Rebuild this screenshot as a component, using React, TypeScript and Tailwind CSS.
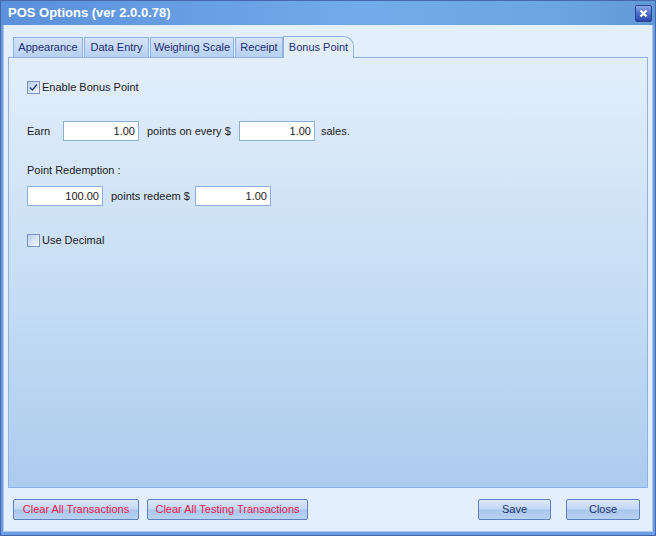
import React from 'react'

const font = { fontFamily: '"Liberation Sans", Arial, sans-serif' }

function Check({ checked }: { checked?: boolean }) {
  return (
    <span className="flex h-[13px] w-[13px] items-center justify-center border border-[#7a95c4] bg-[linear-gradient(135deg,#b7cdec_0%,#dce8f8_60%,#f4f8fe_100%)]">
      {checked && (
        <svg width="9" height="9" viewBox="0 0 9 9">
          <path d="M1 4.5 L3.5 7 L8 1.5" fill="none" stroke="#233d8a" strokeWidth="1.4" />
        </svg>
      )}
    </span>
  )
}

function Box({ value, w }: { value: string; w: string }) {
  return (
    <div className={`flex h-[20px] ${w} items-center justify-end border border-[#8aaee0] bg-white pr-[3px] text-[#1b1b1b]`}>
      {value}
    </div>
  )
}

function Btn({ label, red, w }: { label: string; red?: boolean; w: string }) {
  return (
    <button
      className={`h-[21px] ${w} rounded-[2px] border border-[#5f7fc3] bg-[linear-gradient(180deg,#dde9f9_0%,#c2d8f4_45%,#aac7ee_55%,#b9d2f2_100%)] text-[11px] ${red ? 'text-[#ec1a4c]' : 'text-[#1d2f6e]'}`}
    >
      {label}
    </button>
  )
}

export default function App() {
  const tabs = ['Appearance', 'Data Entry', 'Weighing Scale', 'Receipt']
  const tabW = ['w-[70px]', 'w-[65px]', 'w-[84px]', 'w-[48px]']
  return (
    <div style={font} className="h-[536px] w-[656px] bg-[#4468ab] p-px text-[11px]">
      <div className="flex h-full w-full flex-col bg-[#6d9de0]">
        <div className="flex h-[24px] items-center justify-between bg-[linear-gradient(90deg,#5b90da_0%,#72abeb_55%,#6ba5e2_85%,#6198d6_100%)] pl-[7px] pr-[3px]">
          <span className="text-[13px] font-bold text-white">POS Options (ver 2.0.0.78)</span>
          <span className="flex h-[17px] w-[17px] items-center justify-center rounded-[2px] border border-[#2b4690] bg-[linear-gradient(180deg,#8aa8e8_0%,#4d70cf_50%,#2c48a8_100%)]">
            <svg width="9" height="9" viewBox="0 0 9 9">
              <path d="M1.5 1.5 L7.5 7.5 M7.5 1.5 L1.5 7.5" stroke="white" strokeWidth="2.2" />
            </svg>
          </span>
        </div>
        <div className="mx-[2px] mb-[3px] flex flex-1 flex-col border-l border-r border-b border-[#a9c6ee] bg-[#e3effc] pl-[4px] pr-[4px] pt-[12px]">
          <div className="flex h-[20px] items-end pl-[5px]">
            {tabs.map((t, i) => (
              <div
                key={t}
                className={`${i < 3 ? 'mr-[1px]' : ''} flex h-[20px] ${tabW[i]} items-center justify-center border border-b-0 border-[#8fb2e3] bg-[linear-gradient(180deg,#d3e3f8_0%,#b6d0f1_100%)] text-[#1f2d72]`}
              >
                {t}
              </div>
            ))}
            <div className="relative -mb-px flex h-[22px] w-[71px] items-center justify-center rounded-tr-[10px] border border-b-0 border-[#8fb2e3] bg-[#e3eefb] text-[#1f2d72]">
              Bonus Point
            </div>
          </div>
          <div className="flex h-[431px] flex-col border border-[#8fb2e3] bg-[linear-gradient(180deg,#e3eefb_0%,#c8dff5_50%,#adcbee_100%)] pl-[18px] text-[#1b1b1b]">
            <div className="mt-[23px] flex h-[13px] items-center gap-[2px]">
              <Check checked />
              <span>Enable Bonus Point</span>
            </div>
            <div className="mt-[27px] flex h-[20px] items-center">
              <span className="w-[36px]">Earn</span>
              <Box value="1.00" w="w-[76px]" />
              <span className="w-[100px] pl-[8px]">points on every $</span>
              <Box value="1.00" w="w-[76px]" />
              <span className="pl-[6px]">sales.</span>
            </div>
            <div className="mt-[23px] h-[13px] leading-[13px]">Point Redemption :</div>
            <div className="mt-[9px] flex h-[20px] items-center">
              <Box value="100.00" w="w-[76px]" />
              <span className="w-[92px] pl-[8px]">points redeem $</span>
              <Box value="1.00" w="w-[76px]" />
            </div>
            <div className="mt-[28px] flex h-[13px] items-center gap-[2px]">
              <Check />
              <span>Use Decimal</span>
            </div>
          </div>
          <div className="mt-[11px] flex items-center pl-[5px] pr-[8px]">
            <Btn label="Clear All Transactions" red w="w-[126px]" />
            <div className="w-[8px]" />
            <Btn label="Clear All Testing Transactions" red w="w-[161px]" />
            <div className="flex-1" />
            <Btn label="Save" w="w-[73px]" />
            <div className="w-[15px]" />
            <Btn label="Close" w="w-[74px]" />
          </div>
        </div>
      </div>
    </div>
  )
}
